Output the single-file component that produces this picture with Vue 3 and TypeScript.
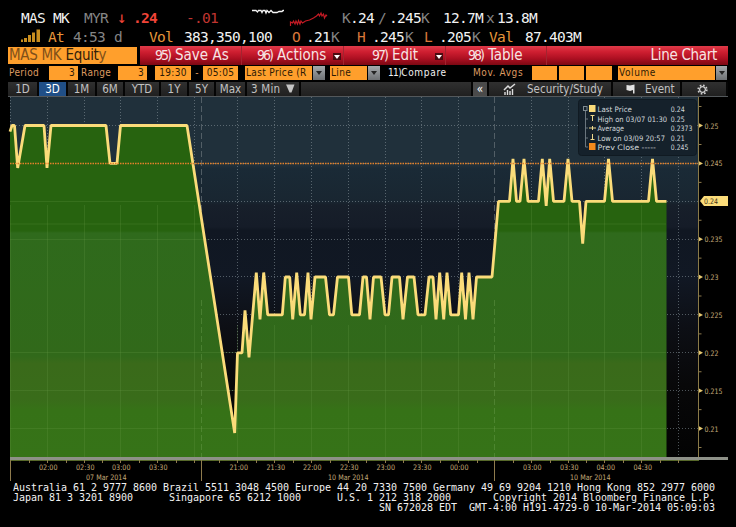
<script setup lang="ts">
type Point = [number, number]

interface Segment {
  text: string
  tone?: string
}

const quoteTop: Segment[] = [
  { text: 'MAS MK' },
  { text: 'MYR', tone: 'dim' },
  { text: '↓', tone: 'red arrow' },
  { text: '.24', tone: 'red bold' },
  { text: '-.01', tone: 'darkred' },
]

const quoteBottom: Segment[] = [
  { text: 'At', tone: 'amber' },
  { text: '4:53', tone: 'dim' },
  { text: 'd', tone: 'dim' },
  { text: 'Vol', tone: 'amber' },
  { text: '383,350,100' },
  { text: 'O', tone: 'orange' },
  { text: '.21' },
  { text: 'K', tone: 'dim' },
  { text: 'H', tone: 'orange' },
  { text: '.245' },
  { text: 'K', tone: 'dim' },
  { text: 'L', tone: 'orange' },
  { text: '.205' },
  { text: 'K', tone: 'dim' },
  { text: 'Val', tone: 'amber' },
  { text: '87.403M' },
]

const ranges = ['1D', '3D', '1M', '6M', 'YTD', '1Y', '5Y', 'Max']

const footer = [
  'Australia 61 2 9777 8600 Brazil 5511 3048 4500 Europe 44 20 7330 7500 Germany 49 69 9204 1210 Hong Kong 852 2977 6000',
  'Japan 81 3 3201 8900      Singapore 65 6212 1000      U.S. 1 212 318 2000       Copyright 2014 Bloomberg Finance L.P.',
  ' '.repeat(61) + 'SN 672028 EDT  GMT-4:00 H191-4729-0 10-Mar-2014 05:09:03',
]

const priceY = (p: number): number => 125.5 + (0.25 - p) * 7575

const prices = [0.25, 0.245, 0.24, 0.235, 0.23, 0.225, 0.22, 0.215, 0.21]
const priceLabels = prices.filter((p) => p !== 0.24).map((p) => ({ y: priceY(p), text: String(p) }))
const minorTicks = [106.5, ...prices.map((p) => priceY(p) + 19)].filter((y) => y < 455)

const gridX = [10.5, 47.5, 84.5, 120.5, 157.5, 194.5, 237.5, 274.5, 311.5, 348.5, 385.5, 421.5, 458.5, 531.5, 568.5, 604.5, 641.5, 678.5]
const days = [201.5, 494.5]
const timeTicks = [29, 47, 66, 84, 102, 120, 139, 157, 176, 194, 219, 237, 256, 274, 293, 311, 330, 348, 366, 385, 403, 421, 440, 458, 477, 513, 531, 550, 568, 586, 604, 623, 641, 660, 678]

const times = [
  { x: 39, text: '02:00' }, { x: 76, text: '02:30' }, { x: 112, text: '03:00' }, { x: 149, text: '03:30' },
  { x: 229.5, text: '21:00' }, { x: 266.5, text: '21:30' }, { x: 303, text: '22:00' }, { x: 340, text: '22:30' },
  { x: 376.5, text: '23:00' }, { x: 413, text: '23:30' }, { x: 450, text: '00:00' },
  { x: 523, text: '03:00' }, { x: 560, text: '03:30' }, { x: 596.5, text: '04:00' }, { x: 633.5, text: '04:30' },
]
const dates = [
  { x: 86, text: '07 Mar 2014' },
  { x: 328, text: '10 Mar 2014' },
  { x: 570, text: '10 Mar 2014' },
]

const series: Point[] = [
  [10, 0.2492], [12, 0.25], [14.5, 0.25], [17.7, 0.245], [25, 0.25], [44, 0.25], [47, 0.245], [51, 0.25],
  [106, 0.25], [110, 0.245], [117, 0.245], [120.5, 0.25], [187, 0.25], [234.7, 0.21], [237.5, 0.22], [242, 0.22],
  [245, 0.225], [249, 0.22], [256.3, 0.23], [260, 0.225], [263.7, 0.23], [267.7, 0.225], [282.3, 0.225],
  [285.3, 0.23], [289.7, 0.23], [292.7, 0.225], [296.7, 0.23], [300.3, 0.225], [304.5, 0.225], [308, 0.23],
  [311, 0.225], [315, 0.23], [325.5, 0.23], [329.5, 0.225], [333.5, 0.225], [337.5, 0.23], [348.5, 0.23],
  [351.8, 0.225], [359.5, 0.225], [363, 0.23], [366.5, 0.23], [370, 0.225], [373.5, 0.23], [381, 0.23],
  [385, 0.225], [388.5, 0.225], [392, 0.23], [399.5, 0.23], [403, 0.225], [407.5, 0.23], [414, 0.23],
  [418, 0.225], [425, 0.225], [429, 0.23], [433, 0.23], [436, 0.225], [439.7, 0.23], [443.7, 0.225],
  [447, 0.23], [450.7, 0.225], [458.5, 0.225], [461.7, 0.23], [465.5, 0.225], [469, 0.23], [473, 0.225],
  [476.5, 0.23], [492, 0.23], [498.5, 0.24], [509.5, 0.24], [513, 0.245], [516.5, 0.24], [520, 0.24],
  [524, 0.245], [528, 0.24], [538.5, 0.24], [542.3, 0.245], [546.2, 0.24], [549.7, 0.245], [553.5, 0.24],
  [564, 0.24], [568, 0.245], [572, 0.24], [579.5, 0.24], [582.7, 0.235], [586, 0.24], [604.5, 0.24],
  [608.5, 0.245], [612.5, 0.24], [648.5, 0.24], [652.5, 0.245], [656.5, 0.24], [666.5, 0.24],
]

const screen: Point[] = series.map(([x, p], i) => {
  const before = series[i - 1]?.[1]
  const after = series[i + 1]?.[1]
  let y = priceY(p)
  if (before !== undefined && after !== undefined) {
    if (before < p && after < p) y -= 4.5
    if (before > p && after > p) y += 4.5
  }
  return [x, y]
})
const linePoints = screen.map(([x, y]) => `${x},${y.toFixed(1)}`).join(' ')
const areaPoints = `10,457 ${linePoints} 666.5,457`

const legend = [
  { y: 112, label: 'Last Price', w: 34.5, value: '0.24', vw: 14 },
  { y: 121.5, label: 'High on 03/07 01:30', w: 69.5, value: '0.25', vw: 14 },
  { y: 131, label: 'Average', w: 26.5, value: '0.2373', vw: 21.5 },
  { y: 140.5, label: 'Low on 03/09 20:57', w: 67.5, value: '0.21', vw: 14 },
  { y: 150, label: 'Prev Close -----', w: 58.5, value: '0.245', vw: 17.5 },
]
</script>

<template>
  <div class="terminal">
    <header class="quote">
      <div class="line top">
        <span v-for="s in quoteTop" :key="s.text" :class="s.tone">{{ s.text }}</span>
        <svg class="spark" width="92" height="24" viewBox="250 6 92 24">
          <path d="M251 10.500h4l1.500 1.500 1-1.500h2.500l1 2 1-2h2l1 2.500 1-2.500 2 2 2-2 2 2h4l2-1h3l1-1h1" fill="none" stroke="#f4f4f4" stroke-width="1.300" />
          <path d="M289.500 26v-4l2 1 1-2 1.500 3 1-3 1.500 3 1-3.500 1.500 3.500 1-3 1.500 2 3-2 4-1 4-2 3-2 2-2 1 2 1.500-3 1 3 1.500-2 1 4 1.500-3 1 1" fill="none" stroke="#c41a24" stroke-width="1.200" />
        </svg>
        <span class="dim">K</span><span>.24</span><span class="dim">/</span><span>.245</span><span class="dim">K</span>
        <span>12.7M</span><span class="dim">x</span><span>13.8M</span>
      </div>
      <div class="line bottom">
        <svg class="signal" width="27" height="16" viewBox="21 28 27 16">
          <g fill="#c98e1f">
            <rect x="21" y="39.500" width="2" height="2.500" /><rect x="24" y="38" width="3" height="4" />
            <rect x="28" y="35" width="3" height="7" /><rect x="32" y="32.500" width="3" height="9.500" />
            <rect x="36.500" y="29.500" width="3.500" height="12.500" />
          </g>
        </svg>
        <span v-for="(s, i) in quoteBottom" :key="i" :class="s.tone">{{ s.text }}</span>
      </div>
    </header>

    <nav class="menu">
      <div class="ticker"><span class="faded">MAS MK</span> Equit<span class="faded">y</span></div>
      <div class="red">
        <div class="item"><b>95)</b><span>Save As</span></div>
        <div class="item"><b>96)</b><span>Actions</span><i class="caret"></i></div>
        <div class="item edit"><b>97)</b><span>Edit</span><i class="caret"></i></div>
        <div class="item tbl"><b>98)</b><span>Table</span></div>
        <div class="title">Line Chart</div>
      </div>
    </nav>

    <div class="params">
      <span class="lab">Period</span><span class="field num">3</span>
      <span class="lab">Range</span><span class="field num">3</span>
      <span></span><span class="field mid">19:30</span><span class="lab dash">-</span><span class="field mid">05:05</span>
      <span></span><span class="field">Last Price (R</span><span class="drop"></span>
      <span></span><span class="field">Line</span><span class="drop"></span>
      <span class="compare"><em>11)</em>Compare</span><span class="lab avgs">Mov. Avgs</span>
      <span class="field gap"></span><span class="field gap"></span><span class="field"></span>
      <span></span><span class="field volume">Volume</span><span class="drop"></span>
    </div>

    <div class="tabs">
      <span v-for="r in ranges" :key="r" class="tab" :class="{ on: r === '3D' }">{{ r }}</span>
      <span class="tab interval">3 Min <svg width="9" height="9" viewBox="0 0 9 9"><path d="M0 0.500h8.500l-3 8h-2z" fill="#c4c4c4" /></svg></span>
      <span class="tab"></span>
      <span class="tab collapse">«</span>
      <span class="tab study">
        <svg width="14" height="12" viewBox="0 0 14 12">
          <path d="M1 7l4-4 2 2 5-4" fill="none" stroke="#ddd" stroke-width="1.500" />
          <path d="M2 12V9M4.500 12V7M7 12V8M9.500 12V6" stroke="#ddd" stroke-width="1.400" />
        </svg>
        Security/Study
      </span>
      <span class="tab event">
        <svg width="10" height="10" viewBox="0 0 10 10"><path d="M0.500 1l3.500 0.500 4.500-1V9.500H7V6L4 7 0.500 6z" fill="#e2e2e2" /></svg>
        Event
      </span>
      <span class="tab gear">
        <svg width="11" height="11" viewBox="-5.500 -5.500 11 11">
          <circle r="4.300" fill="none" stroke="#ccc" stroke-width="1.700" stroke-dasharray="1.700 1.677" />
          <circle r="2.900" fill="none" stroke="#ccc" stroke-width="1.300" />
        </svg>
      </span>
    </div>

    <svg class="chart" width="736" height="386" viewBox="0 97 736 386">
      <defs>
        <linearGradient id="night" x1="0" y1="97" x2="0" y2="457" gradientUnits="userSpaceOnUse">
          <stop offset="0" stop-color="#20303b" /><stop offset="0.190" stop-color="#20303b" />
          <stop offset="0.200" stop-color="#1a2a36" /><stop offset="0.290" stop-color="#192631" />
          <stop offset="0.300" stop-color="#171f2a" /><stop offset="0.360" stop-color="#151c28" />
          <stop offset="0.370" stop-color="#101722" /><stop offset="0.500" stop-color="#111824" />
          <stop offset="0.640" stop-color="#0d0f15" /><stop offset="0.800" stop-color="#080809" />
          <stop offset="1" stop-color="#030303" />
        </linearGradient>
        <linearGradient id="grass" x1="0" y1="97" x2="0" y2="457" gradientUnits="userSpaceOnUse">
          <stop offset="0" stop-color="#27630f" /><stop offset="0.372" stop-color="#27630f" />
          <stop offset="0.378" stop-color="#2f6a1c" /><stop offset="0.720" stop-color="#31691a" />
          <stop offset="0.740" stop-color="#3a6a1a" /><stop offset="0.840" stop-color="#396c1a" />
          <stop offset="0.870" stop-color="#367217" /><stop offset="1" stop-color="#367318" />
        </linearGradient>
      </defs>

      <rect x="10" y="97" width="689" height="360" fill="url(#night)" />
      <g stroke="#8b989f" stroke-opacity="0.550" stroke-dasharray="1 2">
        <line v-for="x in gridX" :key="x" :x1="x" :x2="x" y1="97" y2="457" />
        <line v-for="p in prices" :key="p" x1="10" x2="698" :y1="Math.floor(priceY(p)) + 0.5" :y2="Math.floor(priceY(p)) + 0.5" />
      </g>
      <line v-for="x in days" :key="x" :x1="x" :x2="x" y1="97" y2="457" stroke="#7b858b" stroke-opacity="0.550" stroke-dasharray="6 3" />

      <polygon :points="areaPoints" fill="url(#grass)" />
      <g stroke="#6da04f" stroke-opacity="0.220">
        <template v-for="x in gridX" :key="x">
          <line v-if="x < 660" :x1="x" :x2="x" :y1="x > 200 && x < 490 ? 325 : 205" y2="457" />
        </template>
        <line x1="10" x2="202" y1="201.500" y2="201.500" /><line x1="10" x2="205" y1="224" y2="224" />
        <line x1="498" x2="666" y1="224" y2="224" /><line x1="10" x2="210" y1="239.500" y2="239.500" />
        <line x1="10" x2="666" y1="352.500" y2="352.500" /><line x1="10" x2="666" y1="390.500" y2="390.500" />
        <line x1="10" x2="666" y1="428.500" y2="428.500" />
      </g>
      <line v-for="x in days" :key="'d' + x" :x1="x" :x2="x" y1="300" y2="457" stroke="#79a85c" stroke-opacity="0.350" stroke-dasharray="6 3" />
      <polyline :points="linePoints" fill="none" stroke="#fbdc7a" stroke-width="2.800" stroke-linejoin="bevel" />
      <line x1="10" x2="698" y1="163.500" y2="163.500" stroke="#e3812b" stroke-width="1.300" stroke-dasharray="1.500 1" />

      <rect x="10" y="457" width="718" height="3" fill="#8e9188" />
      <line x1="10" x2="699" y1="460.500" y2="460.500" stroke="#57682a" />
      <line x1="698.500" x2="698.500" y1="97" y2="457" stroke="#8a7a48" />
      <g stroke="#8f7b4d">
        <line v-for="x in [10.5, ...days]" :key="x" :x1="x" :x2="x" y1="460" y2="481" />
        <line v-for="x in timeTicks" :key="'t' + x" :x1="x + 0.5" :x2="x + 0.5" y1="460" y2="463" />
        <line v-for="y in minorTicks" :key="'m' + y" x1="699" x2="701.500" :y1="y" :y2="y" />
      </g>

      <g class="axis">
        <g v-for="p in priceLabels" :key="p.text">
          <path :d="`M699 ${p.y - 2.2}l4 2.200-4 2.200z`" fill="#e5c76f" />
          <text x="704.500" :y="p.y + 3" :textLength="p.text.length > 4 ? 18 : 14" lengthAdjust="spacingAndGlyphs">{{ p.text }}</text>
        </g>
        <text v-for="t in times" :key="t.x" :x="t.x" y="469.800" textLength="18.500" lengthAdjust="spacingAndGlyphs">{{ t.text }}</text>
        <text v-for="d in dates" :key="d.x" :x="d.x" y="479.500" textLength="40.500" lengthAdjust="spacingAndGlyphs">{{ d.text }}</text>
      </g>
      <path d="M700 201l4-5h24v10h-24z" fill="#fbdc7a" />
      <text class="last" x="704" y="204" textLength="14" lengthAdjust="spacingAndGlyphs">0.24</text>

      <rect x="578.500" y="99.500" width="118" height="56" rx="3" fill="#15212b" stroke="#101a22" />
      <g fill="none" stroke="#7f8b92">
        <path d="M585.500 110v37h2.500M585.500 119h2.500M585.500 128h2.500M585.500 138h2.500" stroke-opacity="0.800" />
        <rect x="583.500" y="106.500" width="3.500" height="4" fill="#15212b" />
      </g>
      <rect x="589" y="105" width="6.500" height="7" fill="#fbdc7a" />
      <rect x="589" y="143" width="6.500" height="7" fill="#f58a1c" />
      <path d="M590.500 115.500h4M592.500 115v6M589 128h7M592.500 126v4M592.500 134v6M590.500 139.500h4" stroke="#eed88c" fill="none" />
      <g class="legend">
        <template v-for="l in legend" :key="l.label">
          <text x="597.500" :y="l.y" :textLength="l.w" lengthAdjust="spacingAndGlyphs">{{ l.label }}</text>
          <text x="670.800" :y="l.y" :textLength="l.vw" lengthAdjust="spacingAndGlyphs">{{ l.value }}</text>
        </template>
      </g>
    </svg>

    <footer class="contacts">
      <div v-for="f in footer" :key="f">{{ f }}</div>
    </footer>
  </div>
</template>

<style>
body {
  background: #000;
}
</style>

<style scoped>
.terminal {
  width: 736px;
  height: 527px;
  overflow: hidden;
  background: #000;
  color: #f2f2f2;
  font-family: "DejaVu Sans Condensed", "DejaVu Sans", sans-serif;
  font-stretch: condensed;
}
.quote {
  height: 46px;
  padding: 8px 0 0 21px;
  box-sizing: border-box;
  font: 14.5px/19px "DejaVu Sans Mono", monospace;
  letter-spacing: -0.73px;
}
.line {
  display: grid;
  height: 19px;
  white-space: nowrap;
}
.top {
  grid-template-columns: 63px 33px 16px 53px 65px 91px 8px 28px 11px 32px 22px 43px 11px 50px;
  line-height: 20px;
}
.bottom {
  grid-template-columns: 27px 25px 41px 35px 35px 108px 14px 25px 26px 15px 33px 19px 15px 33px 17px 36px 60px;
  line-height: 20px;
}
.line svg { display: block; }
.spark { margin-top: -2px; }
.signal { margin-top: 1px; }
.dim { color: #858585; }
.red { color: #f04438; }
.bold { font-weight: bold; }
.arrow { font-size: 16px; }
.darkred { color: #c03530; }
.amber { color: #e6963a; }
.orange { color: #d9773a; }

.menu {
  display: grid;
  grid-template-columns: 129px 588px;
  column-gap: 3px;
  height: 19px;
  padding-left: 8px;
  font-size: 15px;
  line-height: 19px;
}
.ticker {
  height: 17px;
  margin-top: 1px;
  padding-left: 1px;
  background: #ff9f2c;
  color: #33200a;
  line-height: 17px;
  white-space: pre;
  letter-spacing: -0.3px;
}
.faded { color: #80501a; }
.menu .red {
  display: grid;
  grid-template-columns: 102px 102px 102px 101px 181px;
  color: #f7e4e4;
  background: linear-gradient(#df3b49 0, #cf1f31 30%, #ae1022 65%, #7c0813 100%);
}
.item {
  display: flex;
  padding-left: 15px;
  border-right: 1px solid #a32430;
  white-space: nowrap;
}
.item b {
  width: 20px;
  font-weight: normal;
  font-size: 14px;
  letter-spacing: -2px;
}
.item span { letter-spacing: 0; }
.item.edit { padding-left: 28px; }
.item.tbl { padding-left: 22px; }
.caret {
  width: 8px;
  height: 7px;
  margin: 7px 2px 0 auto;
  background: #4b0b10;
  display: grid;
  place-items: center;
}
.caret::after, .drop::after {
  content: "";
  border: 3px solid transparent;
  border-top: 4px solid #fff;
  border-bottom: 0;
}
.title {
  padding-right: 11px;
  text-align: right;
  letter-spacing: -0.3px;
}

.params {
  display: grid;
  grid-template-columns: 41px 29px 40px 29px 8px 36px 12px 35px 7px 67px 13px 5px 37px 13px 92px 60px 27px 27px 26px 6px 97px 12px;
  height: 17px;
  padding: 1px 0 2px 8px;
  box-sizing: border-box;
  font-size: 10px;
  line-height: 14px;
  white-space: nowrap;
  letter-spacing: 0.35px;
}
.lab { color: #dd9a60; padding-left: 1px; }
.lab:nth-child(3) { padding-left: 3px; }
.dash { text-align: center; padding: 0; }
.field {
  height: 14px;
  background: #ff9f2c;
  color: #2d1a05;
  padding-left: 1px;
  box-sizing: border-box;
  overflow: hidden;
}
.gap { margin-right: 2px; }
.num { text-align: right; padding-right: 3px; }
.mid { text-align: center; padding: 0; }
.volume { letter-spacing: 0.6px; }
.drop {
  height: 14px;
  margin-left: 1px;
  background: linear-gradient(#a5a9ac, #6e7174);
  display: grid;
  place-items: center;
}
.drop::after { border-top-color: #242424; }
.compare { padding-left: 8px; letter-spacing: 0.7px; }
.compare em { font-style: normal; letter-spacing: -0.6px; }
.lab.avgs { padding-left: 1px; letter-spacing: 0.6px; }

.tabs {
  display: grid;
  grid-template-columns: 31px 29px 29px 28px 36px 28px 27px 31px 54px 172px 16px 124px 69px 46px;
  height: 14px;
  margin-left: 8px;
  width: 720px;
  background: #050505;
  border-bottom: 1px solid #53585b;
  font-size: 11.5px;
  line-height: 14px;
  color: #c2c2c2;
}
.tab {
  background: linear-gradient(#303030, #202020);
  margin-right: 2px;
  text-align: center;
  white-space: nowrap;
  overflow: hidden;
}
.tab.on { background: #204f87; color: #fff; }
.tab.collapse { background: #4a4a4a; color: #fff; }
.tab.interval { text-align: left; padding-left: 4px; letter-spacing: 0.2px; }
.tab.interval svg { margin-left: 2px; }
.tab.study, .tab.event {
  display: flex;
  align-items: center;
  padding-left: 14px;
  gap: 10px;
}
.tab.event { padding-left: 13px; gap: 9px; }
.tab.gear { display: grid; place-items: center; padding-right: 4px; }
.chart { display: block; }
.axis text, .legend text, .last { font-size: 7.5px; }
.axis text { fill: #c3a978; }
.legend text { fill: #d3d9dc; }
.last { fill: #3d3317; }

.contacts {
  padding-left: 13px;
  font: 10px/10px "DejaVu Sans Mono", monospace;
  letter-spacing: -0.02px;
  white-space: pre;
}
</style>
